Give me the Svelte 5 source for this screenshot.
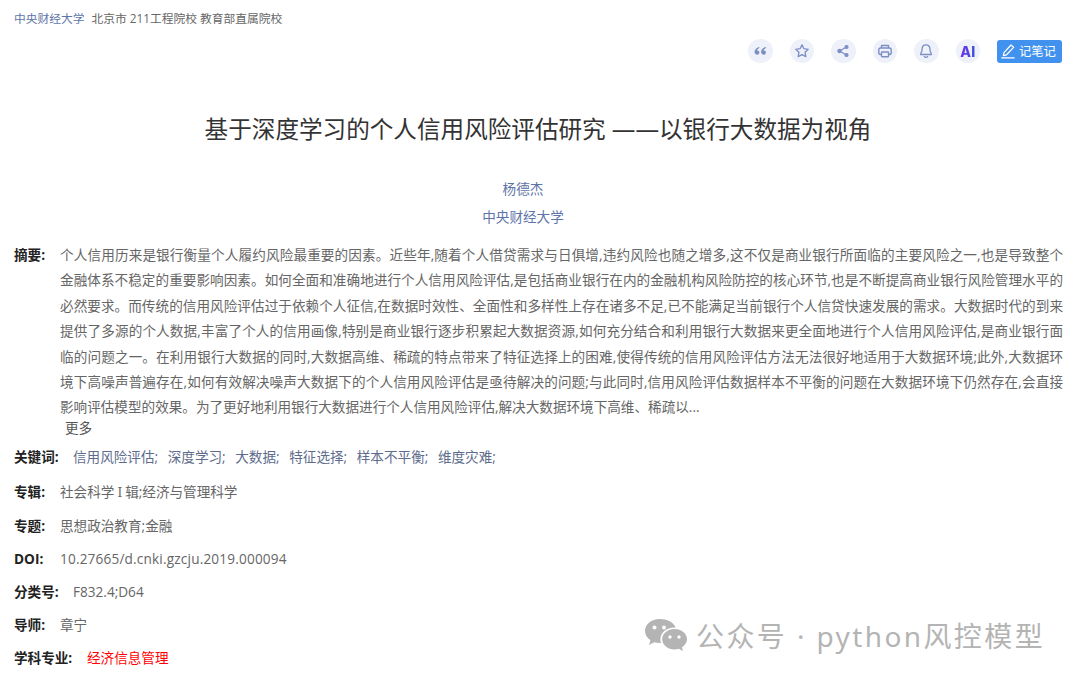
<script>
  const actions = ['quote', 'star', 'share', 'print', 'bell', 'ai'];
  const lines = [
    '个人信用历来是银行衡量个人履约风险最重要的因素。近些年,随着个人借贷需求与日俱增,违约风险也随之增多,这不仅是商业银行所面临的主要风险之一,也是导致整个',
    '金融体系不稳定的重要影响因素。如何全面和准确地进行个人信用风险评估,是包括商业银行在内的金融机构风险防控的核心环节,也是不断提高商业银行风险管理水平的',
    '必然要求。而传统的信用风险评估过于依赖个人征信,在数据时效性、全面性和多样性上存在诸多不足,已不能满足当前银行个人信贷快速发展的需求。大数据时代的到来',
    '提供了多源的个人数据,丰富了个人的信用画像,特别是商业银行逐步积累起大数据资源,如何充分结合和利用银行大数据来更全面地进行个人信用风险评估,是商业银行面',
    '临的问题之一。在利用银行大数据的同时,大数据高维、稀疏的特点带来了特征选择上的困难,使得传统的信用风险评估方法无法很好地适用于大数据环境;此外,大数据环',
    '境下高噪声普遍存在,如何有效解决噪声大数据下的个人信用风险评估是亟待解决的问题;与此同时,信用风险评估数据样本不平衡的问题在大数据环境下仍然存在,会直接',
    '影响评估模型的效果。为了更好地利用银行大数据进行个人信用风险评估,解决大数据环境下高维、稀疏以...'
  ];
  const keywords = ['信用风险评估', '深度学习', '大数据', '特征选择', '样本不平衡', '维度灾难'];
</script>

<div class="page">
  <div class="school"><span class="link">中央财经大学</span><span class="tags">北京市 211工程院校 教育部直属院校</span></div>

  <div class="actions">
    {#each actions as a}
      <span class="circle">
        {#if a === 'quote'}
          <svg width="17" height="17" viewBox="0 0 14 14" fill="#7c8fc4"><path d="M5.600 3.200 6.300 4C5 4.800 4.300 5.500 4.100 6.200c1.200-.2 2 .6 2 1.700 0 1-.8 1.800-1.800 1.800C3 9.700 2.100 8.700 2.100 7.300c0-1.700 1.200-3.100 3.500-4.100z"/><path d="M11 3.200 11.700 4c-1.300.8-2 1.500-2.200 2.200 1.200-.2 2 .6 2 1.700 0 1-.8 1.800-1.800 1.800-1.300 0-2.200-1-2.200-2.400 0-1.700 1.200-3.100 3.500-4.100z"/></svg>
        {:else if a === 'star'}
          <svg width="16" height="16" viewBox="0 0 16 16" fill="none" stroke="#7c8fc4" stroke-width="1.300" stroke-linejoin="round"><path d="M8 1.800l1.900 3.900 4.300.6-3.100 3 .7 4.300L8 11.600l-3.800 2 .7-4.300-3.100-3 4.300-.6z"/></svg>
        {:else if a === 'share'}
          <svg width="14" height="14" viewBox="0 0 14 14" fill="#7c8fc4" stroke="#7c8fc4" stroke-width="1.200"><path d="M10.500 3 3.500 7l7 4" fill="none"/><circle cx="10.500" cy="3" r="1.500"/><circle cx="3.500" cy="7" r="1.600"/><circle cx="10.500" cy="11" r="1.500"/></svg>
        {:else if a === 'print'}
          <svg width="16" height="16" viewBox="0 0 16 16" fill="none" stroke="#7c8fc4" stroke-width="1.400" stroke-linejoin="round"><path d="M4.500 5V2.500h7V5"/><rect x="1.800" y="5" width="12.400" height="6.500" rx="1.800"/><rect x="4.500" y="9" width="7" height="4.800" rx=".6" fill="#eef1f9"/></svg>
        {:else if a === 'bell'}
          <svg width="16" height="16" viewBox="0 0 16 16" fill="none" stroke="#7c8fc4" stroke-width="1.300" stroke-linejoin="round"><path d="M8 1.800c-2.500 0-3.900 1.900-3.900 4.200 0 3-1.500 4.400-1.500 5.500h10.800c0-1.100-1.500-2.500-1.500-5.500 0-2.300-1.400-4.200-3.900-4.200z"/><path d="M6.200 13.600c.9.800 2.700.800 3.600 0" stroke-linecap="round"/></svg>
        {:else}
          <span class="ai">AI</span>
        {/if}
      </span>
    {/each}
    <span class="note">
      <svg width="17" height="17" viewBox="0 0 15 15" fill="none" stroke="#fff" stroke-width="1.100" stroke-linejoin="round" stroke-linecap="round"><path d="M3.500 8.500 9.700 1.800l2.300 2-6.200 6.600-2.800.7z"/><path d="M1.500 13.200h11"/></svg>
      记笔记
    </span>
  </div>

  <h1>基于深度学习的个人信用风险评估研究 ——以银行大数据为视角</h1>

  <div class="author">杨德杰</div>
  <div class="org">中央财经大学</div>

  <div class="abstract">
    <b>摘要:</b>
    <div class="abstract-text">
      {#each lines as line, i}
        <div class="line" class:last={i === lines.length - 1}>{line}</div>
      {/each}
      <div class="more">更多</div>
    </div>
  </div>

  <div class="row keywords"><b>关键词:</b>
    <span class="kw">{#each keywords as k}<span>{k};</span>{/each}</span>
  </div>

  <div class="row album"><b>专辑:</b><span class="val">社会科学<span class="roman">Ⅰ</span>辑;经济与管理科学</span></div>
  <div class="row"><b>专题:</b><span class="val">思想政治教育;金融</span></div>
  <div class="row"><b>DOI:</b><span class="val doi">10.27665/d.cnki.gzcju.2019.000094</span></div>
  <div class="row"><b class="w3">分类号:</b><span class="val">F832.4;D64</span></div>
  <div class="row"><b>导师:</b><span class="val">章宁</span></div>
  <div class="row"><b class="w4">学科专业:</b><span class="val red">经济信息管理</span></div>

  <div class="watermark">
    <svg width="44" height="36" viewBox="0 0 44 36" fill="#b4b4b4">
      <path d="M15.500 1C7.400 1 1 6.300 1 13c0 3.800 2.100 7 5.400 9.200L5 27l5.300-2.800c1.700.5 3.400.8 5.200.8.500 0 1 0 1.500-.1-.4-1.200-.6-2.400-.6-3.700 0-6.600 6-11.800 13.900-11.800h1.300C29.700 4.400 23.200 1 15.500 1z"/>
      <path d="M43 21.200c0-5.700-5.600-10.200-12.400-10.200S18.200 15.500 18.200 21.200s5.600 10.200 12.400 10.200c1.400 0 2.800-.2 4.100-.6l4.300 2.300-1.100-3.800c3-1.900 5.100-4.800 5.100-8.100z"/>
      <circle cx="10.500" cy="9.500" r="2" fill="#fff"/><circle cx="20" cy="9.500" r="2" fill="#fff"/>
      <circle cx="26" cy="19" r="1.700" fill="#fff"/><circle cx="35" cy="19" r="1.700" fill="#fff"/>
    </svg>
    <span>公众号 · python风控模型</span>
  </div>
</div>

<style>
  :global(body) {
    margin: 0;
    background: #fff;
  }
  .page {
    position: relative;
    width: 1080px;
    height: 680px;
    overflow: hidden;
    box-sizing: border-box;
    padding: 9px 18px 0 14px;
    font-family: "Open Sans", "Noto Sans CJK SC", sans-serif;
    font-size: 13.600px;
    color: #666;
  }
  .school {
    display: flex;
    gap: 7px;
    font-size: 11.750px;
    line-height: 18px;
    color: #666;
  }
  .link { color: #5d74a8; }
  .actions {
    display: flex;
    align-items: center;
    justify-content: flex-end;
    gap: 17px;
    margin-top: 12px;
    height: 24px;
  }
  .circle {
    display: flex;
    align-items: center;
    justify-content: center;
    width: 24.500px;
    height: 24.500px;
    border-radius: 50%;
    background: #eef1f9;
  }
  .ai {
    font-family: "Inter", "Liberation Sans", sans-serif;
    font-size: 14px;
    font-weight: 800;
    background: linear-gradient(90deg, #6f35ef, #3d4fd6);
    -webkit-background-clip: text;
    background-clip: text;
    color: transparent;
  }
  .note {
    display: flex;
    align-items: center;
    gap: 2px;
    width: 65px;
    height: 23px;
    box-sizing: border-box;
    padding-left: 3px;
    border-radius: 3px;
    background: #4192ee;
    color: #fff;
    font-size: 12.300px;
  }
  h1 {
    margin: 49px 0 0;
    text-align: center;
    font-size: 23.600px;
    line-height: 34px;
    font-weight: 400;
    color: #333;
  }
  .author, .org {
    text-align: center;
    font-size: 13.600px;
    color: #5d74a8;
    line-height: 20px;
    padding-right: 30px;
  }
  .author { margin-top: 33px; }
  .org { margin-top: 8px; }
  .abstract {
    display: flex;
    margin-top: 15px;
    line-height: 25.400px;
  }
  b {
    font-weight: 700;
    color: #222;
    flex: none;
    width: 46px;
    white-space: nowrap;
  }
  .abstract-text { width: 1003px; flex: none; }
  .line {
    white-space: nowrap;
    text-align: justify;
    text-align-last: justify;
  }
  .line.last { text-align-last: left; }
  .more {
    padding-left: 5px;
    line-height: 16px;
    color: #555;
  }
  .row {
    display: flex;
    line-height: 20px;
    margin-top: 13px;
  }
  .row b.w3 { width: 59px; }
  .row b.w4 { width: 73px; }
  .keywords { margin-top: 11px; }
  .keywords b { width: 59px; }
  .kw { display: flex; gap: 9.600px; color: #5d6b8c; }
  .album { margin-top: 15.500px; }
  .roman { font-family: "DejaVu Serif", "Liberation Serif", serif; font-size: 12px; padding: 0 3px; }
  .doi { letter-spacing: 0.180px; }
  .red { color: #f00; }
  .watermark {
    position: absolute;
    left: 644px;
    top: 617px;
    display: flex;
    align-items: center;
    gap: 8px;
    font-size: 28px;
    line-height: 38px;
    letter-spacing: 2.400px;
    color: #b4b4b4;
    white-space: nowrap;
    font-family: "Noto Sans", "Noto Sans CJK SC", sans-serif;
  }
</style>
